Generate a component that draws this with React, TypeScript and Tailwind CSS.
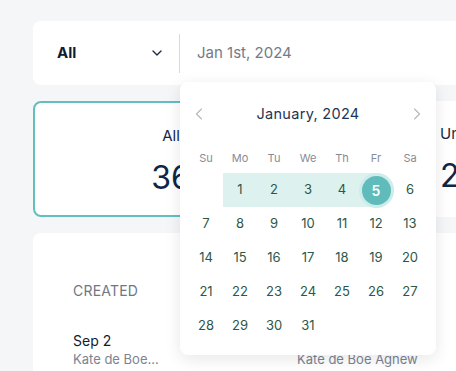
import { ChevronDown, ChevronLeft, ChevronRight } from "lucide-react";

const weekDays = ["Su", "Mo", "Tu", "We", "Th", "Fr", "Sa"];

function DayCell({ day }: { day: number | null }) {
  if (day === null) return <div className="h-[34px]" />;
  return (
    <div className="h-[34px] flex items-center justify-center text-[13px] text-[#2c5849]">
      {day}
    </div>
  );
}

function Calendar() {
  const rest: (number | null)[] = [];
  for (let d = 7; d <= 31; d++) rest.push(d);
  while (rest.length % 7 !== 0) rest.push(null);

  return (
    <div className="absolute left-[180px] top-[82px] w-[256px] h-[273px] rounded-lg bg-white shadow-[0_4px_16px_rgba(15,23,42,0.10)] px-[9px] pt-[20px]">
      {/* Month header */}
      <div className="flex items-center justify-between h-[24px]">
        <ChevronLeft className="w-[20px] h-[20px] text-[#b4b9c1]" strokeWidth={1.4} />
        <span className="text-[14.5px] text-[#1c3556] tracking-[0.3px]">January, 2024</span>
        <ChevronRight className="w-[20px] h-[20px] text-[#b4b9c1]" strokeWidth={1.4} />
      </div>

      {/* Weekdays */}
      <div className="grid grid-cols-7 mt-[22px] h-[20px] items-center">
        {weekDays.map((w) => (
          <div key={w} className="text-center text-[11px] text-[#868c95]">
            {w}
          </div>
        ))}
      </div>

      {/* First week with range */}
      <div className="grid grid-cols-7 mt-[5px]">
        <DayCell day={null} />
        <div className="col-span-5 relative h-[34px]">
          <div className="absolute inset-y-0 left-0 right-[-1px] bg-[#ddf1ef] rounded-r-full" />
          <div className="relative grid grid-cols-5 h-full">
            {[1, 2, 3, 4].map((d) => (
              <div key={d} className="flex items-center justify-center text-[13px] text-[#2c5849]">
                {d}
              </div>
            ))}
            <div className="flex items-center justify-center">
              <div className="w-[29px] h-[29px] rounded-full bg-[#5fbcba] ring-[3px] ring-[#cdeceb] flex items-center justify-center text-[14px] font-semibold text-white">
                5
              </div>
            </div>
          </div>
        </div>
        <DayCell day={6} />
      </div>

      <div className="grid grid-cols-7">
        {rest.map((d, i) => (
          <DayCell key={i} day={d} />
        ))}
      </div>
    </div>
  );
}

export default function App() {
  return (
    <div
      className="relative w-[456px] h-[371px] overflow-hidden bg-[#f5f6f8]"
      style={{ fontFamily: "Inter, 'Noto Sans', sans-serif" }}
    >
      <div className="w-[900px] pl-[33px] pt-[21px]">
        {/* Filter bar */}
        <div className="h-[64px] rounded-lg bg-white flex items-center">
          <div className="w-[146px] flex items-center justify-between pl-[24px] pr-[14px]">
            <span className="text-[15px] font-bold text-[#0f1d33]">All</span>
            <ChevronDown className="w-[16px] h-[16px] text-[#1c2b45]" strokeWidth={2} />
          </div>
          <div className="w-px h-[39px] bg-[#d6d9de]" />
          <span className="pl-[17px] text-[15px] text-[#737b88]">Jan 1st, 2024</span>
        </div>

        {/* Stat cards */}
        <div className="mt-[16px] flex gap-[16px]">
          <div className="w-[276px] h-[116px] rounded-lg border-2 border-[#62bfbd] bg-white flex flex-col items-center pt-[22px]">
            <span className="text-[15px] text-[#12294a]">All</span>
            <span className="mt-[14px] text-[32px] leading-none text-[#0e2648]">36</span>
          </div>
          <div className="w-[276px] h-[116px] rounded-lg bg-white pl-[115px] flex flex-col pt-[22px]">
            <span className="text-[15px] text-[#12294a]">Unassigned</span>
            <span className="mt-[14px] text-[32px] leading-none text-[#0e2648]">2</span>
          </div>
        </div>

        {/* Table card */}
        <div className="mt-[16px] h-[200px] rounded-lg bg-white pl-[40px] pt-[47px]">
          <div className="grid grid-cols-[224px_200px]">
            <span className="text-[14px] text-[#6f7785] tracking-[0.2px]">CREATED</span>
            <span />
          </div>
          <div className="grid grid-cols-[224px_200px] mt-[31px]">
            <div className="flex flex-col">
              <span className="text-[14px] text-[#0f1d33] leading-[18px]">Sep 2</span>
              <span className="text-[13px] text-[#7b8391] leading-[18px] w-[87px] truncate">
                Kate de Boe Agnew
              </span>
            </div>
            <div className="flex flex-col">
              <span className="text-[14px] leading-[18px]">&nbsp;</span>
              <span className="text-[13px] text-[#7b8391] leading-[18px]">Kate de Boe Agnew</span>
            </div>
          </div>
        </div>
      </div>

      <Calendar />
    </div>
  );
}
